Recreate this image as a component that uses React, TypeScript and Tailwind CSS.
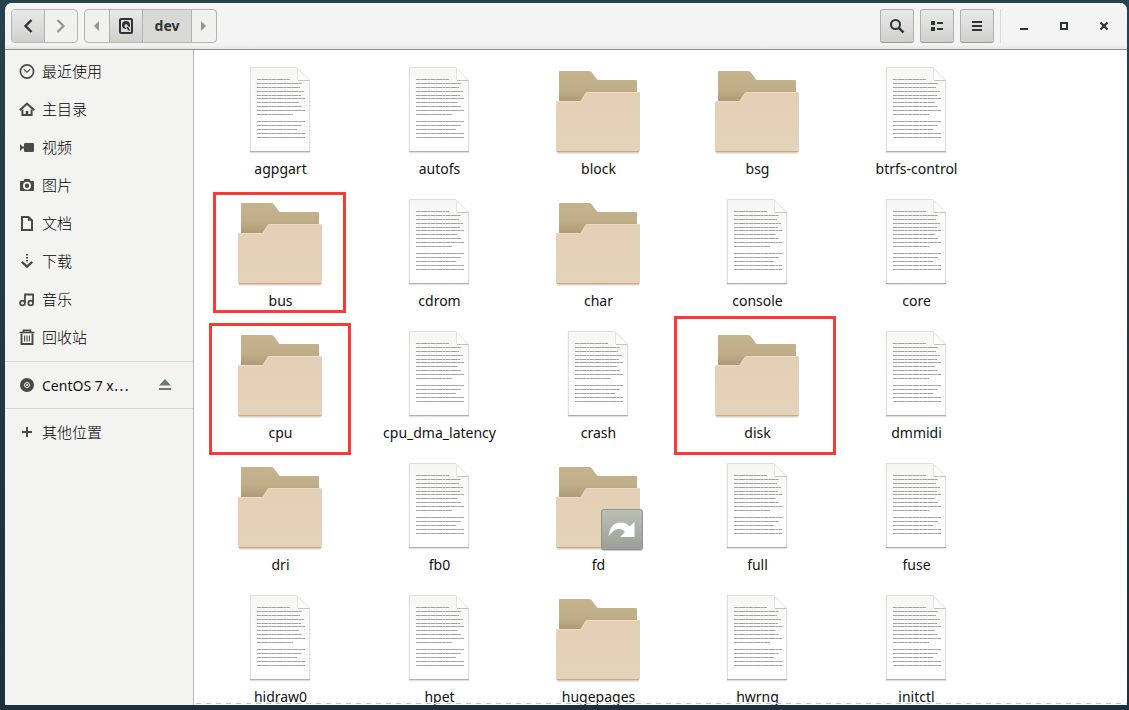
import React from 'react';
import clsx from 'clsx';

type Kind = 'file' | 'folder' | 'link';

interface Entry {
  name: string;
  kind: Kind;
  mark?: string;
}

const ENTRIES: Entry[] = [
  { name: 'agpgart', kind: 'file' },
  { name: 'autofs', kind: 'file' },
  { name: 'block', kind: 'folder' },
  { name: 'bsg', kind: 'folder' },
  { name: 'btrfs-control', kind: 'file' },
  { name: 'bus', kind: 'folder', mark: 'left-3 -top-0.5 w-[133px] h-[121px]' },
  { name: 'cdrom', kind: 'file' },
  { name: 'char', kind: 'folder' },
  { name: 'console', kind: 'file' },
  { name: 'core', kind: 'file' },
  { name: 'cpu', kind: 'folder', mark: 'left-2 -top-[3px] w-[142px] h-[132px]' },
  { name: 'cpu_dma_latency', kind: 'file' },
  { name: 'crash', kind: 'file' },
  { name: 'disk', kind: 'folder', mark: '-left-1 -top-2.5 w-[162px] h-[139px]' },
  { name: 'dmmidi', kind: 'file' },
  { name: 'dri', kind: 'folder' },
  { name: 'fb0', kind: 'file' },
  { name: 'fd', kind: 'link' },
  { name: 'full', kind: 'file' },
  { name: 'fuse', kind: 'file' },
  { name: 'hidraw0', kind: 'file' },
  { name: 'hpet', kind: 'file' },
  { name: 'hugepages', kind: 'folder' },
  { name: 'hwrng', kind: 'file' },
  { name: 'initctl', kind: 'file' },
];

const PLACES = [
  {
    label: '最近使用',
    icon: (
      <g fill="none" stroke="currentColor">
        <circle cx="8" cy="8.5" r="6.6" strokeWidth="1.7" />
        <path d="M4.8 6.3 8 9.1l3.2-3" strokeWidth="1.2" />
      </g>
    ),
  },
  {
    label: '主目录',
    icon: (
      <g fill="none" stroke="currentColor" strokeWidth="2">
        <path d="M.7 9.300 8 2.700l7.300 6.600" />
        <path d="M3.400 8.500v5.600h9.200V8.500" />
        <path d="M8 10v4" strokeWidth="2.600" />
      </g>
    ),
  },
  {
    label: '视频',
    icon: (
      <g fill="currentColor">
        <rect x="5" y="4" width="10" height="9" rx="1" />
        <path d="M1 5v7l2.500-2.500H5v-2H3.500z" />
      </g>
    ),
  },
  {
    label: '图片',
    icon: (
      <path
        fill="currentColor"
        fillRule="evenodd"
        d="M5.5 2h5l1 2H14q1 0 1 1v8q0 1-1 1H2q-1 0-1-1V5q0-1 1-1h2.5zM8 4.8a4 4 0 1 0 0 8 4 4 0 0 0 0-8zm0 1.8a2.2 2.2 0 1 1 0 4.4 2.2 2.2 0 0 1 0-4.4z"
      />
    ),
  },
  {
    label: '文档',
    icon: (
      <g>
        <path d="M3 2h6.500L13 5.500V15H3z" fill="none" stroke="currentColor" strokeWidth="2" />
        <path d="M9 1.500v4.300h4.500z" fill="currentColor" />
      </g>
    ),
  },
  {
    label: '下载',
    icon: (
      <g fill="currentColor">
        <path d="M7 1h2v1.500H7zM7 4h2v1.500H7zM7 7h2v1.500H7z" />
        <path d="m2.800 8.800 5.200 4.800 5.200-4.800" fill="none" stroke="currentColor" strokeWidth="2.400" />
      </g>
    ),
  },
  {
    label: '音乐',
    icon: (
      <g fill="none" stroke="currentColor" strokeWidth="1.8">
        <path d="M6 12V3.300h8.100v8.500M6 3.700h8" />
        <circle cx="3.5" cy="12" r="2.4" />
        <circle cx="11.7" cy="12" r="2.4" />
      </g>
    ),
  },
  {
    label: '回收站',
    icon: (
      <g fill="none" stroke="currentColor">
        <path d="M.5 3.500h15M4.500 3V1.400h7V3" strokeWidth="1.700" />
        <path d="M2.500 4.500V15h11V4.500" strokeWidth="1.900" />
        <path d="M5.600 6.500v6M8 6.500v6M10.400 6.500v6" strokeWidth="1.100" />
      </g>
    ),
  },
];

function PlaceRow({ label, icon, children }: { label: React.ReactNode; icon: React.ReactNode; children?: React.ReactNode }) {
  return (
    <li className="flex h-[38px] items-center pl-3.5">
      <a href="#" className="flex flex-1 items-center gap-[7px]">
        <svg viewBox="0 0 16 16" className="h-4 w-4 shrink-0 text-[#4a4a48]">
          {icon}
        </svg>
        <span className="text-[15px] leading-5 whitespace-nowrap">{label}</span>
      </a>
      {children}
    </li>
  );
}

// Row ends of the dummy text printed on the document icon
const TEXT_LINES = [
  [17, 57], [21, 69], [25, 67], [29, 71], [33, 68], [36, 72], [40, 66], [44, 69], [48, 72], [52, 60],
  [59, 72], [63, 69], [67, 64], [71, 72], [75, 72],
];

function FileIcon() {
  return (
    <svg viewBox="1 0 96 96" className="h-24 w-24">
      <path d="M18.5 6.5h47l12 13v71h-59z" fill="#000" opacity=".1" stroke="#000" strokeWidth="1.5" />
      <path d="M18.5 5.5h46l13 13v71h-59z" fill="url(#paper)" stroke="#dededc" />
      <path d="M18 89.5h60" stroke="#b0b0ae" />
      <path d="M65.5 5.500v13h12.500z" fill="#fff" />
      <path d="M66 18.500h12" stroke="#c4c4c2" />
      <path d="M64.500 5.500 78 18.500M65.500 6v12" fill="none" stroke="#e2e2e0" />
      {TEXT_LINES.map(([y, end]) => (
        <g key={y} strokeWidth="1">
          <path d={`M25 ${y + 0.5}H${end + 1}`} stroke="#c2c2c2" />
          <path d={`M25 ${y + 0.5}H${end + 1}`} stroke="#a2a2a2" strokeDasharray="4 1 6 1 2 1" />
        </g>
      ))}
    </svg>
  );
}

function FolderIcon({ linked }: { linked?: boolean }) {
  return (
    <svg viewBox="1 0 96 96" className="h-24 w-24 overflow-visible">
      <path d="M7 88h82v2.5q0 1-1 1H8q-1 0-1-1z" fill="#000" opacity=".18" />
      <path d="M9 10q0-1 1-1h29q1.5 0 2.5 1l6 8H86q1 0 1 1v40H9z" fill="url(#back)" />
      <path d="M6 40q0-1 1-1h23.5l5-8q.8-1 2-1H89q1 0 1 1v57.5q0 2-2 2H8q-2 0-2-2z" fill="url(#front)" />
      <path d="M6.5 40q0-.5 1-.5h23.5l5-8q.6-1 1.8-1H89" fill="none" stroke="#eddcc6" />
      <path d="M7 89.5h82" stroke="#c9a97e" />
      {linked && (
        <g transform="translate(0 4)">
          <rect x="51" y="48" width="42" height="41" rx="3" fill="#000" opacity=".2" />
          <rect x="51.5" y="47.5" width="41" height="40" rx="2.5" fill="url(#emblem)" stroke="#8f938c" />
          <path d="M58.500 74.500c1-9 5-14 12-14 4.500 0 7 1.500 9 4l5-4.500V75H70l5-5c-4-5-11-4-16.500 4.500z" fill="#fff" />
        </g>
      )}
    </svg>
  );
}

function Gradients() {
  return (
    <svg className="absolute h-0 w-0" aria-hidden="true">
      <defs>
        <linearGradient id="paper" x2="0" y2="1">
          <stop offset="0" stopColor="#f6f6f5" />
          <stop offset=".6" stopColor="#fff" />
        </linearGradient>
        <linearGradient id="back" x2="0" y2="1">
          <stop offset="0" stopColor="#c5b38e" />
          <stop offset=".35" stopColor="#c1af8a" />
          <stop offset=".65" stopColor="#a99873" />
        </linearGradient>
        <linearGradient id="front" x2="0" y2="1">
          <stop offset="0" stopColor="#e4d0b6" />
          <stop offset="1" stopColor="#e4d2b9" />
        </linearGradient>
        <linearGradient id="emblem" x2="0" y2="1">
          <stop offset="0" stopColor="#bbbfb7" />
          <stop offset="1" stopColor="#9b9f97" />
        </linearGradient>
      </defs>
    </svg>
  );
}

const raised = 'bg-linear-to-b from-[#e9e9e7] to-[#d0d0cd]';

function ToolButton({ label, children }: { label: string; children: React.ReactNode }) {
  return (
    <button
      aria-label={label}
      className={clsx('flex h-[34px] w-[34px] items-center justify-center rounded-[3px] border border-[#b0b0ad] border-b-[#989895] text-[#2e3436]', raised)}
    >
      <svg viewBox="0 0 16 16" className="h-4 w-4">{children}</svg>
    </button>
  );
}

function WindowButton({ label, children }: { label: string; children: React.ReactNode }) {
  return (
    <button aria-label={label} className="flex h-[34px] w-10 items-center justify-center text-[#2e3436]">
      <svg viewBox="0 0 16 16" className="h-4 w-4">{children}</svg>
    </button>
  );
}

function HeaderBar() {
  return (
    <header className="flex h-[47px] shrink-0 items-center justify-between rounded-t-[7px] border-b border-[#8f8f8a] bg-linear-to-b from-[#f5f5f5] via-[#f3f3f3] via-90% to-[#e6e6e6] pr-[3px] pl-1.5 shadow-[inset_0_1px_0_#fff]">
      <div className="flex gap-1.5">
        <div className="flex h-[34px] overflow-hidden rounded-[4px] border border-[#b4b4b1] bg-[#f1f1f0]">
          <button aria-label="后退" className={clsx('flex w-[33px] items-center justify-center border-r border-[#b0b0ad] text-[#2e3436]', raised)}>
            <svg viewBox="0 0 16 16" className="h-4 w-4">
              <path d="M11.500 2 5.500 8l6 6" fill="none" stroke="currentColor" strokeWidth="2.400" />
            </svg>
          </button>
          <button aria-label="前进" disabled className="flex w-8 items-center justify-center text-[#929595]">
            <svg viewBox="0 0 16 16" className="h-4 w-4">
              <path d="m4.500 2 6 6-6 6" fill="none" stroke="currentColor" strokeWidth="2.200" />
            </svg>
          </button>
        </div>
        <nav className="flex h-[34px] overflow-hidden rounded-[4px] border border-[#b4b4b1] bg-[#f1f1f0]">
          <button aria-label="向左" disabled className="flex w-6 items-center justify-center text-[#929595]">
            <svg viewBox="0 0 6 10" className="h-2.5 w-1.5">
              <path d="M5 0v10L0 5z" fill="currentColor" />
            </svg>
          </button>
          <button aria-label="根目录" className={clsx('flex w-[34px] items-center justify-center border-x border-[#b0b0ad] text-[#2e3436]', raised)}>
            <svg viewBox="0 0 16 16" className="h-4 w-4">
              <rect x="2" y="1" width="12" height="14" rx="1" fill="none" stroke="currentColor" strokeWidth="2" />
              <circle cx="8" cy="7" r="4" fill="currentColor" />
              <circle cx="8" cy="7.500" r="1.300" fill="#dededc" />
              <path d="m7.500 7.500 4.500 5" stroke="#dededc" strokeWidth="3" />
              <path d="m9 9 2.500 3.500" stroke="currentColor" strokeWidth="1.500" />
            </svg>
          </button>
          <button className="w-[49px] border-r border-[#b0b0ad] bg-[#d9d9d7] text-sm leading-5 font-bold text-[#2e3436]">dev</button>
          <button aria-label="向右" disabled className="flex w-6 items-center justify-center text-[#929595]">
            <svg viewBox="0 0 6 10" className="h-2.5 w-1.5">
              <path d="M0 0v10l5-5z" fill="currentColor" />
            </svg>
          </button>
        </nav>
      </div>

      <div className="flex items-center">
        <div className="flex gap-1.5">
          <ToolButton label="搜索">
            <g fill="none" stroke="currentColor">
              <circle cx="6.500" cy="6.500" r="4.500" strokeWidth="2" />
              <path d="m9.800 9.800 4.700 4.700" strokeWidth="2.400" />
            </g>
          </ToolButton>
          <ToolButton label="查看">
            <path fill="currentColor" d="M2 3h4v4H2zM8 4h6v2H8zM2 9h4v4H2zM8 10h6v2H8z" />
          </ToolButton>
          <ToolButton label="菜单">
            <path fill="currentColor" d="M3 3h10v2H3zM3 7h10v2H3zM3 11h10v2H3z" />
          </ToolButton>
        </div>
        <div className="mr-[3px] ml-1.5 h-[34px] w-px bg-[#d8d8d6]" />
        <WindowButton label="最小化">
          <path d="M4 10h8v2H4z" fill="currentColor" />
        </WindowButton>
        <WindowButton label="最大化">
          <path d="M5 5h6v6H5z" fill="none" stroke="currentColor" strokeWidth="2" />
        </WindowButton>
        <WindowButton label="关闭">
          <path d="m4.500 4.500 7 7m0-7-7 7" fill="none" stroke="currentColor" strokeWidth="2.200" />
        </WindowButton>
      </div>
    </header>
  );
}

function Sidebar() {
  return (
    <aside className="w-[189px] shrink-0 border-r border-[#b4b4b1] bg-[#f3f3f1] font-light text-black">
      <ul className="border-b border-[#d9d9d7] pt-0.5 pb-[5px]">
        {PLACES.map((place) => (
          <PlaceRow key={place.label} label={place.label} icon={place.icon} />
        ))}
      </ul>
      <ul className="border-b border-[#d9d9d7] py-1">
        <PlaceRow
          label={
            <span className="text-sm font-normal text-[#111]">
              CentOS 7 x<span className="font-['Noto_Sans_CJK_SC',sans-serif]">…</span>
            </span>
          }
          icon={
            <g>
              <circle cx="8" cy="8" r="7" fill="currentColor" />
              <circle cx="8" cy="8" r="2.500" fill="none" stroke="#f3f3f1" />
              <circle cx="8" cy="8" r="1" fill="#f3f3f1" />
            </g>
          }
        >
          <button aria-label="弹出" className="mr-5 text-[#6f7775]">
            <svg viewBox="0 0 16 16" className="h-4 w-4">
              <path d="M8 2 2 8.500h12zM2 11h12v2H2z" fill="currentColor" />
            </svg>
          </button>
        </PlaceRow>
      </ul>
      <ul className="pt-1">
        <PlaceRow label="其他位置" icon={<path d="M7 3h2v4h4v2H9v4H7V9H3V7h4z" fill="currentColor" />} />
      </ul>
    </aside>
  );
}

export default function App() {
  return (
    <div className="flex h-screen flex-col overflow-hidden bg-linear-to-b from-[#27424b] to-[#1d303f] pt-[3px] pr-0.5 pb-[5px] pl-[5px] font-['Noto_Sans','Noto_Sans_CJK_SC',sans-serif]">
      <Gradients />
      <HeaderBar />
      <div className="flex min-h-0 flex-1">
        <Sidebar />
        <main className="relative flex-1 overflow-hidden bg-white pt-3 pl-[7px]">
          <ul className="grid grid-cols-[repeat(auto-fill,159px)] gap-y-3.5">
            {ENTRIES.map((entry) => (
              <li key={entry.name} className="relative flex flex-col items-center">
                {entry.kind === 'file' ? <FileIcon /> : <FolderIcon linked={entry.kind === 'link'} />}
                <span className="text-[14px] leading-[22px] text-[#111]">{entry.name}</span>
                {entry.mark && <span className={clsx('absolute border-3 border-[#f93a37]', entry.mark)} />}
              </li>
            ))}
          </ul>
          <div className="absolute inset-x-0 bottom-px h-px bg-[repeating-linear-gradient(90deg,#fff_0_2px,#c4c4c4_2px_7px,#fff_7px_10px)]" />
        </main>
      </div>
    </div>
  );
}
